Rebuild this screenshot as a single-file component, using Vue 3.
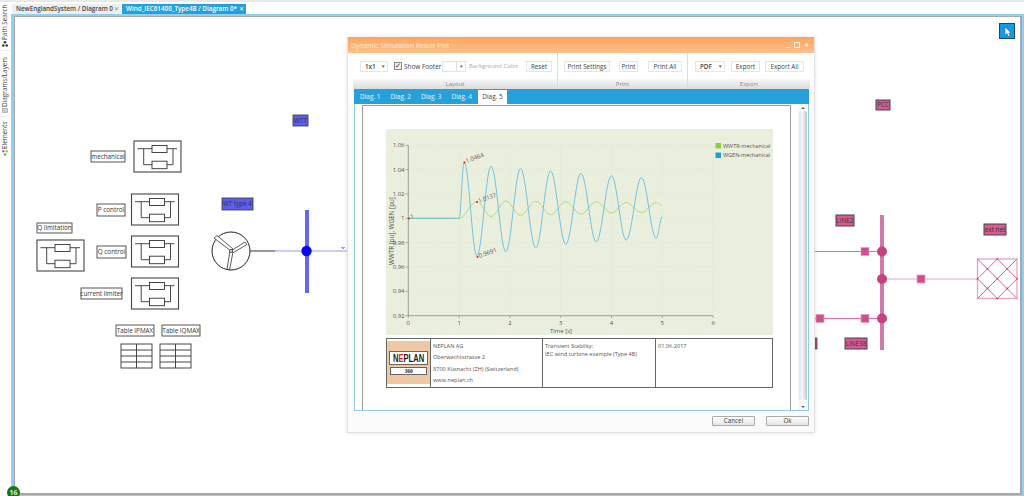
<script setup>
const sx = t => 408.3 + t * 50.8
const sy = v => 218.3 - (v - 1) * 1217
function curve(points) {
  let d = `M${sx(0)} ${sy(1)} L${sx(points[0][0])} ${sy(points[0][1])}`
  for (let i = 1; i < points.length; i++) {
    const [t0, v0] = points[i - 1]
    const [t1, v1] = points[i]
    for (let s = 1; s <= 12; s++) {
      const f = s / 12
      const k = (1 - Math.cos(Math.PI * f)) / 2
      d += ` L${sx(t0 + (t1 - t0) * f).toFixed(2)} ${sy(v0 + (v1 - v0) * k).toFixed(2)}`
    }
  }
  return d
}
const blue = curve([[1, 1], [1.1, 1.0464], [1.35, 0.9691], [1.63, 1.043], [1.92, 0.9725], [2.21, 1.041], [2.51, 0.9755], [2.8, 1.039], [3.1, 0.9785], [3.4, 1.037], [3.7, 0.9805], [4, 1.035], [4.29, 0.982], [4.59, 1.0335], [4.88, 0.9835], [5.0, 1.0015]])
const green = curve([[1, 1], [1.35, 1.0137], [1.63, 1.0015], [1.92, 1.0142], [2.21, 1.0025], [2.51, 1.014], [2.8, 1.003], [3.1, 1.0135], [3.4, 1.0035], [3.7, 1.0135], [4, 1.0045], [4.29, 1.013], [4.59, 1.0048], [4.88, 1.0128], [5.0, 1.0105]])
const yTicks = [1.06, 1.04, 1.02, 1, 0.98, 0.96, 0.94, 0.92]
const xTicks = [0, 1, 2, 3, 4, 5, 6]

const blocks = [[134, 141], [131.5, 194], [131.5, 236], [131.5, 278], [37, 240]]
const tables = [121, 160]
const whiteLabels = [
  ['mechanical', 91, 151, 34, 11], ['P control', 97, 204, 28, 12], ['Q control', 97, 246, 29, 12],
  ['current limiter', 81, 288, 41, 11], ['Q limitation', 37, 223, 35, 10],
  ['Table IPMAX', 116, 325, 38, 11], ['Table IQMAX', 162, 325, 38, 11]
]
const blueLabels = [['WT type 4', 222, 198, 31, 12], ['WTT', 293, 115, 15, 11]]
const pinkLabels = [
  ['PCC', 876, 100, 14, 10], ['LINE2', 836, 215, 18, 11], ['ext net', 984, 224, 22, 11], ['LINE38', 845, 338, 22, 11]
]
const squares = [[865, 251.5], [921, 279], [820, 318.5], [865, 318.5]]
const nodes = [251.5, 279, 318.5]
const hatchDots = [[987.4, 268.9], [1007.1, 268.9], [997.3, 278.8], [987.4, 288.6], [1007.1, 288.6], [997.3, 259], [997.3, 298.5], [977.5, 278.8], [1017, 278.8]]

const tabs = ['Diag. 1', 'Diag. 2', 'Diag. 3', 'Diag. 4', 'Diag. 5']
</script>

<template>
  <div class="app">
    <div class="topstrip"></div>
    <div class="shell">
      <aside class="side">
        <div class="vtab t1">
          <svg class="vicon" width="6" height="6" viewBox="0 0 7 7"><circle cx="3.5" cy="1.5" r="1.5" fill="#333"/><circle cx="1.5" cy="5.3" r="1.5" fill="#333"/><circle cx="5.5" cy="5.3" r="1.5" fill="#333"/></svg>
          <span>Path Search</span>
        </div>
        <div class="vtab t2">
          <svg class="vicon" width="6" height="5" viewBox="0 0 7 6"><rect x="0.5" y="0.5" width="6" height="5" fill="#ccc" stroke="#999" stroke-width="0.7"/></svg>
          <span>Diagrams/Layers</span>
        </div>
        <div class="vtab t3">
          <svg class="vicon" width="6" height="6" viewBox="0 0 7 7"><circle cx="1.5" cy="1.5" r="1.4" fill="#e040e0"/><circle cx="5.5" cy="1.5" r="1.4" fill="#9ccc30"/><circle cx="3.5" cy="5.3" r="1.4" fill="#40c040"/></svg>
          <span>Elements</span>
        </div>
      </aside>
      <div class="work">
        <div class="tabbar">
          <div class="doc-tab">NewEnglandSystem / Diagram 0 <span class="x">✕</span></div>
          <div class="doc-tab active">Wind_IEC61400_Type4B / Diagram 0* <span class="x">✕</span></div>
        </div>
        <div class="canvas-outer">
          <div class="canvas-inner">
            <svg class="diagram" viewBox="15 17 1005 474" width="1005" height="474">
              <g v-for="b in blocks" :key="b.join()" :transform="`translate(${b[0]} ${b[1]})`" fill="none" stroke="#333">
                <rect x="0" y="0" width="47" height="31" stroke="#444" stroke-width="1.1"/>
                <path d="M3.5 7.7H43M9.7 7.7V23.7H39V7.7" stroke-width="0.9"/>
                <rect x="18" y="4.5" width="15" height="7" fill="#fff" stroke-width="0.9"/>
                <rect x="18" y="20.2" width="15" height="7.5" fill="#fff" stroke-width="0.9"/>
              </g>
              <g v-for="t in tables" :key="t" :transform="`translate(${t} 344)`" fill="none" stroke="#333" stroke-width="0.9">
                <rect width="31" height="24"/>
                <path d="M0 6H31M0 12H31M0 18H31M15.5 0V24"/>
              </g>
              <g v-for="l in whiteLabels" :key="l[0]">
                <rect :x="l[1]" :y="l[2]" :width="l[3]" :height="l[4]" fill="#fff" stroke="#444" stroke-width="0.9"/>
                <text class="lbl" :x="l[1] + l[3] / 2" :y="l[2] + l[4] / 2 + 2.3">{{ l[0] }}</text>
              </g>
              <g v-for="l in blueLabels" :key="l[0]">
                <rect :x="l[1]" :y="l[2]" :width="l[3]" :height="l[4]" fill="#5c5cf0" stroke="#444" stroke-width="0.9"/>
                <text class="lbl" :x="l[1] + l[3] / 2" :y="l[2] + l[4] / 2 + 2.3">{{ l[0] }}</text>
              </g>
              <g v-for="l in pinkLabels" :key="l[0]">
                <rect :x="l[1]" :y="l[2]" :width="l[3]" :height="l[4]" fill="#d85a94" stroke="#444" stroke-width="1"/>
                <text class="lbl" :x="l[1] + l[3] / 2" :y="l[2] + l[4] / 2 + 2.3">{{ l[0] }}</text>
              </g>
              <rect x="815" y="338" width="2" height="11" fill="#d85a94" stroke="#333" stroke-width="0.7"/>

              <circle cx="231" cy="251" r="19" fill="#fff" stroke="#222" stroke-width="1"/>
              <g fill="#fff" stroke="#333" stroke-width="0.8">
                <path d="M231 251L214 238L217 235.5L233 249Z"/>
                <path d="M231 251L245 242L247 244.5L232.5 253Z"/>
                <path d="M230 251L227 269L229.5 270L233 252Z"/>
              </g>
              <circle cx="231" cy="251" r="1.5" fill="#fff" stroke="#222" stroke-width="0.8"/>
              <path d="M250 251H275" stroke="#333" stroke-width="1"/>
              <path d="M275 251H347" stroke="#9a9af5" stroke-width="1.1"/>
              <path d="M307 210V293" stroke="#6666f2" stroke-width="4"/>
              <circle cx="306.5" cy="251" r="5.2" fill="#0808ea"/>
              <path d="M341 247.5H345M342 248.5H344" stroke="#8a70c0" stroke-width="0.7"/>

              <path d="M815 251.5H882M815 318.5H882" stroke="#dc70a4" stroke-width="1"/>
              <path d="M882 279H977" stroke="#e8a0c2" stroke-width="1.2"/>
              <path d="M882 215V350" stroke="#d27aa6" stroke-width="4"/>
              <circle v-for="n in nodes" :key="n" cx="882" :cy="n" r="5" fill="#c8417f"/>
              <rect v-for="s in squares" :key="s.join()" :x="s[0] - 4" :y="s[1] - 4" width="8" height="8" fill="#d04f8c" stroke="#e8a0c2" stroke-width="0.7"/>
              <g fill="none" stroke="#d9609a" stroke-width="1">
                <rect x="977.5" y="259" width="39.5" height="39.5" stroke="#e8a0c2" stroke-width="1.3"/>
                <path d="M977.5 259L1017 298.5M1017 259L977.5 298.5M997.3 259L1017 278.8L997.3 298.5L977.5 278.8Z"/>
              </g>
              <circle v-for="h in hatchDots" :key="h.join()" :cx="h[0]" :cy="h[1]" r="1" fill="#d04f8c"/>
            </svg>
            <button class="cursor-btn" aria-label="Select">
              <svg width="9" height="11" viewBox="0 0 9 11"><path d="M2 1V9L4 7.5L5.5 10.5L7 9.5L5.8 7H8Z" fill="#fff" stroke="#555" stroke-width="0.5"/></svg>
            </button>
          </div>
        </div>
      </div>
    </div>
    <div class="badge">16</div>

    <section class="dialog">
      <header class="d-title">
        <span>Dynamic Simulation Result Plot</span>
        <span class="wctl">
          <i class="min"></i><i class="max"></i><b>✕</b>
        </span>
      </header>
      <div class="toolbar">
        <div class="group g1">
          <div class="g-body">
            <div class="sel s11">1x1<em>▾</em></div>
            <span class="check">✓</span>
            <span class="t show">Show Footer</span>
            <div class="color"><span></span><em>▾</em></div>
            <span class="t muted">Background Color</span>
            <div class="btn reset">Reset</div>
          </div>
          <div class="g-cap">Layout</div>
        </div>
        <div class="group g2">
          <div class="g-body">
            <div class="btn ps">Print Settings</div>
            <div class="btn pr">Print</div>
            <div class="btn pa">Print All</div>
          </div>
          <div class="g-cap">Print</div>
        </div>
        <div class="group g3">
          <div class="g-body">
            <div class="sel pdf">PDF<em>▾</em></div>
            <div class="btn ex">Export</div>
            <div class="btn ea">Export All</div>
          </div>
          <div class="g-cap">Export</div>
        </div>
      </div>
      <nav class="d-tabs">
        <span v-for="t in tabs" :key="t" :class="['d-tab', { on: t === 'Diag. 5' }]">{{ t }}</span>
      </nav>
      <div class="d-content">
        <div class="page">
          <svg class="chart" viewBox="386 129 387 206" width="387" height="206">
            <rect x="386" y="129" width="387" height="206" fill="#eaefdd"/>
            <g stroke="#dbe3c6" stroke-width="0.6" stroke-dasharray="1 1.5">
              <line v-for="v in yTicks" :key="'g' + v" x1="408.3" x2="713" :y1="sy(v)" :y2="sy(v)"/>
              <line v-for="t in xTicks" :key="'v' + t" :x1="sx(t)" :x2="sx(t)" y1="145" y2="315.7"/>
            </g>
            <path d="M408.3 145.3V315.7H713" fill="none" stroke="#8a8a8a" stroke-width="0.8"/>
            <g stroke="#8a8a8a" stroke-width="0.7">
              <line v-for="v in yTicks" :key="'yt' + v" x1="405.5" x2="408.3" :y1="sy(v)" :y2="sy(v)"/>
              <line v-for="t in xTicks" :key="'xt' + t" :x1="sx(t)" :x2="sx(t)" y1="315.7" y2="318"/>
            </g>
            <text v-for="v in yTicks" :key="'yl' + v" class="tick" x="404.5" :y="sy(v) + 2" text-anchor="end">{{ v }}</text>
            <text v-for="t in xTicks" :key="'xl' + t" class="tick" :x="sx(t)" y="325" text-anchor="middle">{{ t }}</text>
            <text class="tick" x="561" y="333" text-anchor="middle">Time [s]</text>
            <text class="tick ylab" transform="translate(393.5 231) rotate(-90)" text-anchor="middle">WWTR [pu], WGEN [pu]</text>
            <path :d="green" fill="none" stroke="#abd46f" stroke-width="0.9"/>
            <path :d="blue" fill="none" stroke="#66bde0" stroke-width="0.9"/>
            <g fill="#e81818">
              <circle cx="409" cy="218.5" r="1"/>
              <circle cx="464.5" cy="162.5" r="1"/>
              <circle cx="477" cy="202" r="1"/>
              <circle cx="477.5" cy="257" r="1"/>
            </g>
            <text class="tick" transform="translate(411 219) rotate(-20)">1</text>
            <text class="tick" transform="translate(466.5 163) rotate(-20)">1.0464</text>
            <text class="tick" transform="translate(479 203) rotate(-20)">1.0137</text>
            <text class="tick" transform="translate(479.5 258) rotate(-20)">0.9691</text>
            <rect x="715.5" y="143" width="5.5" height="5.5" fill="#96cc3c"/>
            <rect x="715.5" y="152.5" width="5.5" height="5.5" fill="#1c9fe2"/>
            <text class="tick legend" x="723" y="148">WWTR-mechanical</text>
            <text class="tick legend" x="723" y="157.3">WGEN-mechanical</text>
          </svg>
          <div class="foot">
            <div class="logo">
              <div class="logo-box">
                <div class="logo-name"><span class="squeeze">N<span class="red">E</span>PLAN</span></div>
                <div class="logo-ver">360</div>
              </div>
            </div>
            <div class="cell addr">
              <p>NEPLAN AG</p><p>Oberwachtstrasse 2</p><p>8700 Küsnacht (ZH) (Switzerland)</p><p>www.neplan.ch</p>
            </div>
            <div class="cell desc">Transient Stability:<br>IEC wind turbine example (Type 4B)</div>
            <div class="cell date">01.06.2017</div>
          </div>
        </div>
        <div class="scroll">
          <span class="up"></span>
          <span class="thumb"></span>
          <span class="down"></span>
        </div>
      </div>
      <footer class="d-foot">
        <div class="btn2">Cancel</div>
        <div class="btn2">Ok</div>
      </footer>
    </section>
  </div>
</template>

<style scoped>
.app {
  position: relative;
  width: 1024px;
  height: 496px;
  overflow: hidden;
  background: #fff;
  display: flex;
  flex-direction: column;
  font-family: "Open Sans", "Noto Sans", sans-serif;
  color: #444;
}
.topstrip { height: 2px; background: #e9e9e9; flex: none; }
.shell { flex: 1; display: flex; min-height: 0; }
.work { flex: 1; display: flex; flex-direction: column; min-width: 0; }
.tabbar {
  height: 12px;
  box-sizing: border-box;
  display: flex;
  padding: 2px 0 0 1px;
  gap: 1px;
  background: #fff;
  flex: none;
}
.doc-tab {
  width: 109px;
  height: 10px;
  background: #eeeeee;
  color: #444;
  font-size: 6.3px;
  font-weight: 600;
  line-height: 10px;
  padding: 0 2px 0 4px;
  box-sizing: border-box;
  white-space: nowrap;
  display: flex;
  justify-content: space-between;
}
.doc-tab.active { width: 124px; background: #26a0da; color: #fff; }
.x { color: #999; font-size: 6px; font-weight: 400; }
.active .x { color: #fff; }
.side {
  width: 11px;
  background: #fff;
  display: flex;
  flex-direction: column;
  padding-top: 1px;
  box-sizing: border-box;
  flex: none;
}
.vtab {
  writing-mode: vertical-rl;
  transform: rotate(180deg);
  font-size: 6.4px;
  line-height: 10px;
  display: flex;
  align-items: center;
  justify-content: flex-start;
  gap: 1px;
  color: #444;
  width: 10px;
  white-space: nowrap;
  box-sizing: border-box;
  padding: 3px 0 0;
  border-top: 1px solid #ececec;
}
.vicon { transform: rotate(180deg); flex: none; }
.t1 { height: 48px; margin-bottom: 3px; }
.t2 { height: 63px; margin-bottom: 3px; padding-top: 3px; }
.t3 { height: 40px; border-top-color: #fff; }
.canvas-outer {
  flex: 1;
  border: 2px solid #8fd0f2;
  border-width: 2px 2px 1px 3px;
  background: #fff;
  display: flex;
  min-width: 0;
  min-height: 0;
}
.canvas-inner {
  position: relative;
  flex: 1;
  border: 1px solid #a8a8a8;
  border-width: 1px 2px 2px 1px;
  overflow: hidden;
}
.diagram { display: block; }
.lbl {
  font-size: 6.3px;
  text-anchor: middle;
  fill: #333;
  font-family: "Open Sans", sans-serif;
}
.cursor-btn {
  position: absolute;
  left: 984px;
  top: 6px;
  width: 16px;
  height: 16px;
  padding: 0;
  background: #0f9cec;
  border: 1px solid #17496a;
  display: flex;
  align-items: center;
  justify-content: center;
}
.badge {
  position: absolute;
  left: 7px;
  top: 486px;
  width: 13px;
  height: 13px;
  border-radius: 50%;
  background: #0d7a16;
  color: #dfeedd;
  font-size: 7px;
  font-weight: 700;
  line-height: 13px;
  text-align: center;
}

.dialog {
  position: absolute;
  left: 347px;
  top: 37px;
  width: 468px;
  height: 396px;
  box-sizing: border-box;
  border: 1px solid #e2e2e2;
  border-top: 0;
  background: #fafafa;
  box-shadow: 0 0 4px rgba(0, 0, 0, 0.12);
  display: flex;
  flex-direction: column;
}
.d-title {
  height: 16px;
  background: linear-gradient(#ffa45c, #fcc08e);
  color: #fbe8d8;
  font-size: 6.8px;
  display: flex;
  justify-content: space-between;
  align-items: center;
  padding: 0 5px 0 3px;
  flex: none;
}
.wctl { display: flex; align-items: center; gap: 4px; }
.wctl .min { width: 5px; height: 1px; background: #fff; margin-top: 4px; opacity: .8; }
.wctl .max { width: 4px; height: 4px; border: 1px solid #fff; opacity: .8; }
.wctl b { font-size: 6px; color: #fff; font-weight: 400; }
.toolbar {
  height: 36px;
  display: flex;
  flex: none;
  padding-left: 5px;
  background: #fff;
}
.group {
  display: flex;
  flex-direction: column;
  border-right: 1px solid #dcdcdc;
  box-sizing: border-box;
}
.g1 { width: 205px; }
.g2 { width: 130px; }
.g3 { width: 122px; border-right: 0; }
.g-body {
  flex: 1;
  display: flex;
  align-items: center;
  font-size: 6.5px;
}
.g-cap {
  height: 10px;
  font-size: 6px;
  line-height: 10px;
  text-align: center;
  color: #888;
  background: linear-gradient(#f7f7f7, #dcdcdc);
}
.btn, .sel {
  height: 11px;
  line-height: 9px;
  box-sizing: border-box;
  border: 1px solid #e6e6e6;
  background: #fff;
  text-align: center;
  color: #444;
  font-size: 6.3px;
  white-space: nowrap;
}
.sel {
  display: flex;
  justify-content: space-between;
  padding: 0 2px 0 4px;
  font-weight: 600;
}
.sel em { font-style: normal; font-size: 5px; color: #777; }
.s11 { width: 28px; margin-left: 7px; }
.check {
  width: 8px;
  height: 8px;
  box-sizing: border-box;
  border: 1px solid #888;
  margin-left: 6px;
  font-size: 7px;
  line-height: 6px;
  text-align: center;
  color: #333;
  background: #eee;
}
.t { white-space: nowrap; font-size: 6.4px; }
.show { margin-left: 2px; width: 38px; }
.muted { color: #aaa; margin-left: 3px; width: 54px; font-size: 5.9px; }
.color {
  width: 24px;
  height: 11px;
  box-sizing: border-box;
  border: 1px solid #e6e6e6;
  display: flex;
  justify-content: flex-end;
  background: #fff;
}
.color span { flex: 1; }
.color em { width: 8px; border-left: 1px solid #e0e0e0; font-style: normal; font-size: 5px; line-height: 9px; text-align: center; color: #555; }
.reset { width: 26px; margin-left: 3px; }
.ps { width: 46px; margin-left: 6px; }
.pr { width: 19px; margin-left: 9px; }
.pa { width: 34px; margin-left: 10px; }
.pdf { width: 30px; margin-left: 7px; }
.ex { width: 29px; margin-left: 6px; }
.ea { width: 39px; margin-left: 5px; }

.d-tabs {
  height: 15px;
  margin: 0 5px 0 6px;
  background: #26a0da;
  display: flex;
  align-items: flex-end;
  padding-left: 1px;
  flex: none;
}
.d-tab {
  width: 30.5px;
  height: 14px;
  line-height: 14px;
  text-align: center;
  font-size: 6.5px;
  color: #e5f4fb;
}
.d-tab.on { background: #fff; color: #444; width: 29px; margin-left: 1px; }
.d-content {
  height: 307px;
  margin: 0 5px 0 6px;
  box-sizing: border-box;
  border: 1px solid #92cbe8;
  border-top: 0;
  background: #fff;
  display: flex;
  flex: none;
  position: relative;
}
.page {
  width: 429px;
  margin: 1px 0 0 7px;
  box-sizing: border-box;
  border: 1px solid #9a9a9a;
  border-bottom: 0;
  padding: 23px 0 0 23px;
}
.chart { display: block; }
.tick {
  font-size: 6px;
  fill: #555;
  font-family: "Open Sans", sans-serif;
}
.ylab { font-size: 6.3px; }
.legend { font-size: 5.5px; }
.foot {
  width: 387px;
  height: 50px;
  margin-top: 3px;
  box-sizing: border-box;
  border: 1px solid #666;
  display: grid;
  grid-template-columns: 43px 112px 113px 1fr;
  background: #fff;
}
.logo {
  background: #efc7a2;
  margin: 2px 0 3px;
  display: flex;
  align-items: center;
  justify-content: center;
}
.logo-box { width: 39px; }
.logo-name {
  background: #fff;
  border: 1px solid #666;
  font-family: "Liberation Sans", sans-serif;
  font-weight: 700;
  font-size: 10.5px;
  line-height: 12px;
  color: #1c1c1c;
  overflow: hidden;
  display: flex;
  justify-content: center;
}
.squeeze { flex: none; transform: scaleX(0.72); }
.red { color: #d22; }
.logo-ver {
  margin: 2px 1px 0;
  background: #fff;
  border: 1px solid #666;
  font-family: "Liberation Serif", serif;
  font-weight: 700;
  font-size: 5.5px;
  line-height: 6px;
  text-align: center;
  color: #222;
}
.cell {
  border-left: 1px solid #666;
  font-size: 5.6px;
  color: #555;
  padding: 2.5px 1px 0 2px;
  line-height: 8.5px;
  white-space: nowrap;
}
.addr { padding-top: 3px; }
.addr p { margin: 0 0 3px; line-height: 8.3px; }
.scroll {
  position: absolute;
  right: 1px;
  top: 1px;
  bottom: 0;
  width: 9px;
  display: flex;
  flex-direction: column;
  align-items: center;
  background: #f8f8f8;
}
.up, .down { width: 0; height: 0; border: 2px solid transparent; flex: none; }
.up { border-bottom-color: #666; margin-bottom: 2px; }
.down { border-top-color: #666; margin-bottom: 0; margin-top: 6px; }
.thumb {
  flex: 1;
  width: 8px;
  border-radius: 2px;
  background: linear-gradient(90deg, #dfe3e6, #f6f7f8 40%, #bfc6cb);
}
.d-foot {
  flex: 1;
  display: flex;
  justify-content: flex-end;
  gap: 11px;
  padding: 5px 5px 0 0;
}
.btn2 {
  width: 43px;
  height: 10px;
  box-sizing: border-box;
  border: 1px solid #aaa;
  border-radius: 1px;
  background: linear-gradient(#fdfdfd, #e5e5e5);
  font-size: 6.3px;
  line-height: 8px;
  text-align: center;
  color: #444;
}
</style>
